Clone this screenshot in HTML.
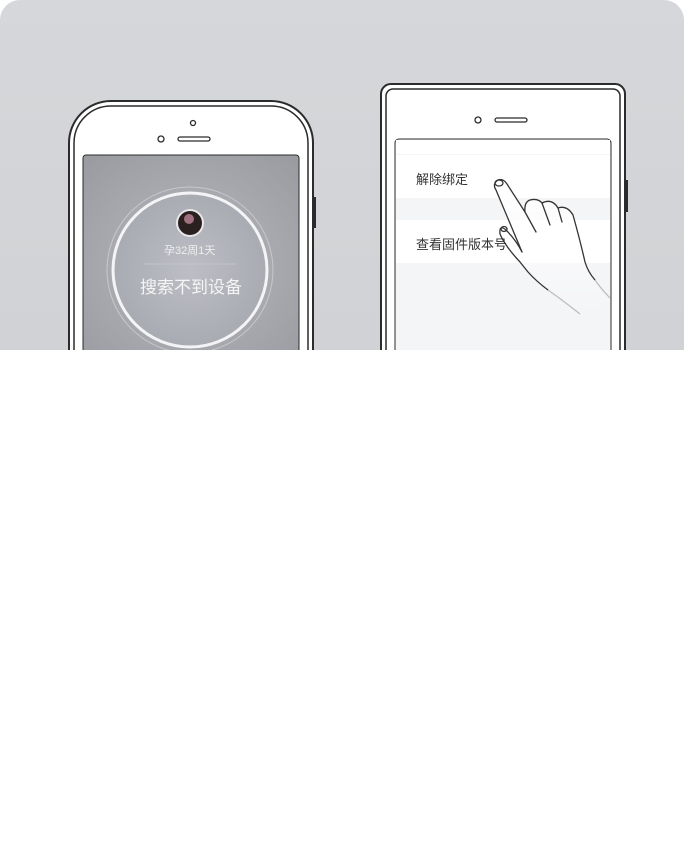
<!DOCTYPE html>
<html><head><meta charset="utf-8"><style>
html,body{margin:0;padding:0;background:#fff;width:684px;height:863px;overflow:hidden}
.bg{position:absolute;left:0;top:0;width:684px;height:350px;background:linear-gradient(#d5d7da,#d0d2d5);border-radius:20px 20px 0 0;overflow:hidden}
.t{position:absolute;font-family:"Liberation Sans","Noto Sans CJK SC",sans-serif;white-space:nowrap}
</style></head><body>
<div class="bg">
<svg width="684" height="350" style="position:absolute;left:0;top:0">
<defs>
<radialGradient id="g" cx="0.5" cy="0.55" r="0.7"><stop offset="0" stop-color="#b8b9bf"/><stop offset="1" stop-color="#9a9ca2"/></radialGradient>
<radialGradient id="c" cx="0.5" cy="0.5" r="0.5"><stop offset="0" stop-color="#bdbec5"/><stop offset="1" stop-color="#a9abb2"/></radialGradient>
<linearGradient id="fade" x1="0" y1="0" x2="0" y2="1"><stop offset="0" stop-color="#fff"/><stop offset="1" stop-color="#fff" stop-opacity="0"/></linearGradient>
</defs>
<rect x="69" y="101" width="244" height="300" rx="42" fill="#fff" stroke="#2b2b2b" stroke-width="2"/>
<rect x="74" y="106" width="234" height="290" rx="37" fill="none" stroke="#2b2b2b" stroke-width="1.5"/>
<rect x="313" y="197" width="3" height="31" fill="#2b2b2b"/>
<circle cx="193" cy="123" r="2.5" fill="none" stroke="#2b2b2b" stroke-width="1.3"/>
<circle cx="161" cy="139" r="3" fill="none" stroke="#2b2b2b" stroke-width="1.3"/>
<rect x="178" y="137" width="32" height="4" rx="2" fill="none" stroke="#2b2b2b" stroke-width="1.3"/>
<rect x="83" y="155" width="216" height="200" rx="3" fill="url(#g)" stroke="#2b2b2b" stroke-width="1"/>
<circle cx="190" cy="270" r="83" fill="none" stroke="#c7c8cd" stroke-width="1"/>
<circle cx="190" cy="270" r="77" fill="url(#c)" stroke="#f4f4f6" stroke-width="3"/>
<circle cx="190" cy="223" r="14" fill="#e8e8ea"/>
<circle cx="190" cy="223" r="12" fill="#2a2020"/>
<circle cx="189" cy="219" r="5" fill="#a07080"/>
<line x1="143" y1="264" x2="237" y2="264" stroke="#c3c4c9" stroke-width="1"/>
<rect x="381" y="84" width="244" height="300" rx="10" fill="#fff" stroke="#2b2b2b" stroke-width="2"/>
<rect x="386" y="89" width="234" height="290" rx="7" fill="none" stroke="#2b2b2b" stroke-width="1.5"/>
<rect x="625" y="180" width="3" height="32" fill="#2b2b2b"/>
<circle cx="478" cy="120" r="3" fill="none" stroke="#2b2b2b" stroke-width="1.3"/>
<rect x="495" y="118" width="32" height="4" rx="2" fill="none" stroke="#2b2b2b" stroke-width="1.3"/>
<rect x="395" y="139" width="216" height="220" rx="4" fill="#f4f5f7" stroke="#2b2b2b" stroke-width="1"/>
<rect x="396" y="140" width="214" height="14" fill="#fff"/>
<rect x="396" y="155" width="214" height="43" fill="#fff"/>
<rect x="396" y="220" width="214" height="43" fill="#fff"/>
<!-- hand fill -->
<path d="M498 180 Q492 184 496 190 L522 252 Q516 240 506 230 Q499 224 500 234 Q505 246 520 262 L528 272 Q540 285 560 300 L580 315 L610 300 Q595 285 588 270 Q580 240 573 215 Q567 205 558 208 Q552 198 542 203 Q538 198 530 200 Q524 202 525 212 L507 184 Q503 178 498 180 Z" fill="url(#fade)"/>
<g fill="none" stroke="#333" stroke-width="1.3" stroke-linejoin="round" stroke-linecap="round">
<path d="M522 252 Q516 240 506 230 Q499 224 500 234 Q505 246 520 262 L528 272 Q536 281 548 290"/>
<path d="M522 252 L496 190 Q492 184 498 180 Q503 178 507 184 L525 212 Q524 202 530 200 Q538 198 542 203 Q552 198 558 208 Q567 205 573 215 Q580 240 585 262 Q588 272 595 280"/>
<path d="M525 212 L536 232 M542 203 L550 225 M558 208 L562 222"/>
<ellipse cx="499" cy="183" rx="4" ry="3"/>
<ellipse cx="504" cy="229" rx="3" ry="2.5"/>
</g>
<path d="M548 290 Q565 302 580 314 M595 280 Q602 290 610 298" stroke="#bbb" stroke-width="1.2" fill="none"/>
</svg>
<div class="t" style="left:164px;top:242px;font-size:11px;color:#eee">孕32周1天</div>
<div class="t" style="left:140px;top:273px;font-size:17px;color:#f5f5f5">搜索不到设备</div>
<div class="t" style="left:416px;top:169px;font-size:13px;color:#333">解除绑定</div>
<div class="t" style="left:416px;top:234px;font-size:13px;color:#333">查看固件版本号</div>
</div>
</body></html>
